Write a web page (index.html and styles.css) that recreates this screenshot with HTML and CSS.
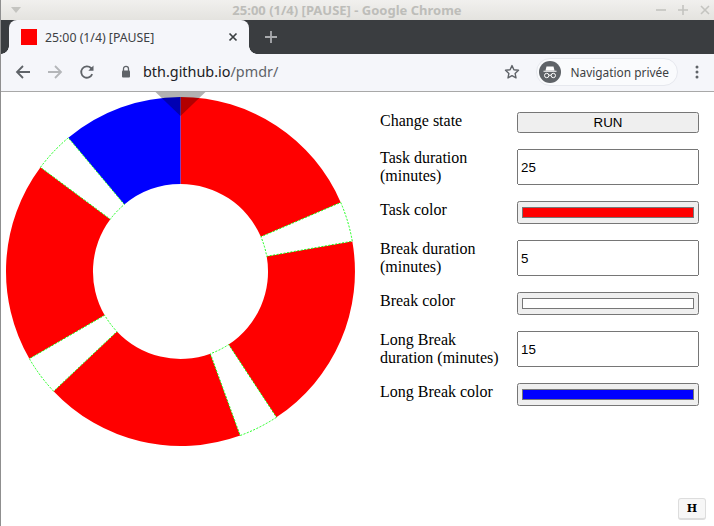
FILE: index.html
```html
<!DOCTYPE html>
<html lang="fr">
<head>
    <meta charset="UTF-8">
    <meta name="viewport" content="width=device-width, initial-scale=1.0">
    <title>25:00 (1/4) [PAUSE]</title>
    <link rel="stylesheet" href="styles.css">
</head>
<body>
    <header class="titlebar">
        <svg class="win-menu" width="12" height="8" viewBox="0 0 12 8"><path d="M1 1h10L6 7z" fill="#c4c4c0"/></svg>
        <span class="win-title">25:00 (1/4) [PAUSE] - Google Chrome</span>
        <div class="win-buttons">
            <svg width="10" height="10" viewBox="0 0 10 10"><path d="M0 5h10" stroke="#c4c4c0" stroke-width="1.6"/></svg>
            <svg width="10" height="10" viewBox="0 0 10 10"><path d="M0 5h10M5 0v10" stroke="#c4c4c0" stroke-width="1.6"/></svg>
            <svg width="10" height="10" viewBox="0 0 10 10"><path d="M1 1l8 8M9 1l-8 8" stroke="#c4c4c0" stroke-width="1.6"/></svg>
        </div>
    </header>

    <div class="tabstrip">
        <div class="tab">
            <span class="favicon"></span>
            <span class="tab-title">25:00 (1/4) [PAUSE]</span>
            <svg class="tab-close" width="10" height="10" viewBox="0 0 10 10"><path d="M1.5 1.5l7 7M8.5 1.5l-7 7" stroke="#3c4043" stroke-width="1.7"/></svg>
        </div>
        <svg class="new-tab" width="12" height="12" viewBox="0 0 12 12"><path d="M6 0v12M0 6h12" stroke="#a9abae" stroke-width="1.8"/></svg>
    </div>

    <nav class="toolbar">
        <svg class="nav-icon" width="16" height="16" viewBox="0 0 16 16"><path d="M15 8H2.5M8 2L2 8l6 6" fill="none" stroke="#5f6368" stroke-width="1.8"/></svg>
        <svg class="nav-icon" width="16" height="16" viewBox="0 0 16 16"><path d="M1 8h12.5M8 2l6 6-6 6" fill="none" stroke="#b4b6b9" stroke-width="1.8"/></svg>
        <svg class="nav-icon" width="16" height="16" viewBox="0 0 16 16"><path d="M13.2 10.2A5.7 5.7 0 1 1 12 4l1 1" fill="none" stroke="#5f6368" stroke-width="1.8"/><path d="M14.5 1.5v5.2H9.3z" fill="#5f6368"/></svg>
        <div class="omnibox">
            <svg width="10" height="13" viewBox="0 0 10 13"><path d="M2.5 6V3.8a2.5 2.5 0 0 1 5 0V6" fill="none" stroke="#5f6368" stroke-width="1.3"/><rect x="1" y="5.5" width="8" height="7" rx="1" fill="#5f6368"/></svg>
            <span class="url">bth.github.io<span class="url-path">/pmdr/</span></span>
        </div>
        <svg class="star" width="16" height="16" viewBox="0 0 16 16"><path d="M8 1.6l1.9 4.2 4.6.5-3.4 3.1.9 4.5L8 11.7l-4 2.2.9-4.5-3.4-3.1 4.6-.5z" fill="none" stroke="#5f6368" stroke-width="1.4" stroke-linejoin="round"/></svg>
        <div class="incognito">
            <svg width="22" height="22" viewBox="0 0 22 22">
                <circle cx="11" cy="11" r="11" fill="#5f6368"/>
                <path d="M7.5 5.5h7l1 4h-9zM4.5 9.7h13v1.1h-13z" fill="#fff"/>
                <circle cx="7.7" cy="14.5" r="2.2" fill="none" stroke="#fff" stroke-width="1"/>
                <circle cx="14.3" cy="14.5" r="2.2" fill="none" stroke="#fff" stroke-width="1"/>
                <path d="M9.9 14.2h2.2" stroke="#fff" stroke-width="1"/>
            </svg>
            <span>Navigation privée</span>
        </div>
        <svg class="dots" width="4" height="14" viewBox="0 0 4 14"><circle cx="2" cy="2" r="1.5" fill="#5f6368"/><circle cx="2" cy="7" r="1.5" fill="#5f6368"/><circle cx="2" cy="12" r="1.5" fill="#5f6368"/></svg>
    </nav>

    <main class="page">
        <svg class="timer" width="360" height="434" viewBox="-179.5 -179.5 360 434">
            <g fill="#f00">
                <path d="M0 -174.5A174.5 174.5 0 0 1 160.2 -69.1L80.4 -34.7A87.5 87.5 0 0 0 0 -87.5Z"/>
                <path d="M171.8 -30.3A174.5 174.5 0 0 1 95.9 145.8L48.1 73.1A87.5 87.5 0 0 0 86.2 -15.2Z"/>
                <path d="M59.7 164A174.5 174.5 0 0 1 -126.9 119.7L-63.6 60A87.5 87.5 0 0 0 29.9 82.2Z"/>
                <path d="M-151.1 87.25A174.5 174.5 0 0 1 -140 -104.2L-70.2 -52.3A87.5 87.5 0 0 0 -75.8 43.75Z"/>
            </g>
            <path fill="#00f" d="M-112.2 -133.7A174.5 174.5 0 0 1 0 -174.5L0 -87.5A87.5 87.5 0 0 0 -56.2 -67Z"/>
            <g class="gap">
                <path d="M160.2 -69.1A174.5 174.5 0 0 1 171.8 -30.3L86.2 -15.2A87.5 87.5 0 0 0 80.4 -34.7Z"/>
                <path d="M95.9 145.8A174.5 174.5 0 0 1 59.7 164L29.9 82.2A87.5 87.5 0 0 0 48.1 73.1Z"/>
                <path d="M-126.9 119.7A174.5 174.5 0 0 1 -151.1 87.25L-75.8 43.75A87.5 87.5 0 0 0 -63.6 60Z"/>
                <path d="M-140 -104.2A174.5 174.5 0 0 1 -112.2 -133.7L-56.2 -67A87.5 87.5 0 0 0 -70.2 -52.3Z"/>
            </g>
            <polygon class="marker" points="-25,-179.5 25,-179.5 0,-155.5"/>
        </svg>

        <form class="settings">
            <label>Change state</label>
            <input type="button" value="RUN">
            <label for="task">Task duration (minutes)</label>
            <input type="number" id="task" value="25">
            <label for="taskcolor">Task color</label>
            <input type="color" id="taskcolor" value="#ff0000">
            <label for="break">Break duration (minutes)</label>
            <input type="number" id="break" value="5">
            <label for="breakcolor">Break color</label>
            <input type="color" id="breakcolor" value="#ffffff">
            <label for="long">Long Break duration (minutes)</label>
            <input type="number" id="long" value="15">
            <label for="longcolor">Long Break color</label>
            <input type="color" id="longcolor" value="#0000ff">
        </form>

        <button type="button" class="help">H</button>
    </main>
</body>
</html>
```

FILE: styles.css
```css
html,
body {
    margin: 0;
    padding: 0;
    height: 100%;
}

body {
    display: flex;
    flex-direction: column;
    overflow: hidden;
    box-sizing: border-box;
    border-left: 1px solid #8f8f8f;
    background: #fff;
    font-family: "Noto Sans", sans-serif;
}

/* window title bar */
.titlebar {
    height: 20px;
    flex: none;
    display: flex;
    align-items: center;
    justify-content: space-between;
    padding: 0 4px 0 9px;
    background: linear-gradient(to bottom, #f1f0ee, #e4e3df);
}

.win-title {
    margin-left: 16px;
    font-size: 13px;
    font-weight: bold;
    color: #bdbdb9;
}

.win-buttons {
    display: flex;
    gap: 12px;
}

/* tabs */
.tabstrip {
    height: 34px;
    flex: none;
    display: flex;
    align-items: center;
    padding-left: 8px;
    background: #3a3d40;
}

.tab {
    position: relative;
    align-self: stretch;
    width: 240px;
    box-sizing: border-box;
    display: flex;
    align-items: center;
    padding: 0 11px 0 12px;
    background: #f5f6fa;
    border-radius: 8px 8px 0 0;
}

.tab::before,
.tab::after {
    content: "";
    position: absolute;
    bottom: 0;
    width: 8px;
    height: 8px;
}

.tab::before {
    left: -8px;
    background: radial-gradient(circle at 0 0, transparent 7.5px, #f5f6fa 8px);
}

.tab::after {
    right: -8px;
    background: radial-gradient(circle at 100% 0, transparent 7.5px, #f5f6fa 8px);
}

.favicon {
    width: 16px;
    height: 16px;
    background: #f00;
    margin-right: 8px;
}

.tab-title {
    flex: 1;
    font-size: 12.3px;
    color: #3c4043;
}

.new-tab {
    margin-left: 16px;
}

/* toolbar */
.toolbar {
    height: 38px;
    flex: none;
    display: flex;
    align-items: center;
    padding: 0 15px 2px 14px;
    box-sizing: border-box;
    background: #f5f6fa;
    border-bottom: 1px solid #a8a8a8;
}

.nav-icon {
    margin-right: 16px;
}

.omnibox {
    display: flex;
    align-items: center;
    gap: 12px;
    flex: 1;
    margin-left: 10px;
}

.url {
    font-size: 14.4px;
    color: #202124;
}

.url-path {
    color: #5f6368;
}

.star {
    margin-right: 16px;
}

.incognito {
    display: flex;
    align-items: center;
    gap: 9px;
    height: 26px;
    padding: 0 8px 0 2px;
    margin-right: 17px;
    border: 1px solid #e6e8ee;
    border-radius: 14px;
    font-size: 11.9px;
    color: #3c4043;
    background: #fafbfd;
}

/* page */
.page {
    flex: 1;
    display: flex;
    align-items: flex-start;
    background: #fff;
    position: relative;
}

.timer {
    flex: none;
}

.gap path {
    fill: #fff;
    stroke: #0f0;
    stroke-width: 0.9;
    stroke-dasharray: 2 1.5;
}

.marker {
    fill: rgba(0, 0, 0, 0.3);
}

.settings {
    display: grid;
    grid-template-columns: 137px 182px;
    row-gap: 16px;
    align-items: start;
    margin: 20px 0 0 19px;
}

.settings label {
    font-family: "Liberation Serif", serif;
    font-size: 16px;
    line-height: 18px;
    color: #000;
    padding-right: 16px;
}

.settings input {
    width: 100%;
    box-sizing: border-box;
    margin: 0;
    font-family: "Liberation Sans", sans-serif;
    font-size: 13.333px;
}

.settings input[type="button"] {
    height: 21px;
}

.settings input[type="number"] {
    height: 36px;
}

.settings input[type="color"] {
    height: 23px;
}

.help {
    position: absolute;
    right: 8px;
    bottom: 6px;
    width: 28px;
    height: 22px;
    padding: 0;
    border: 1px solid #ddd;
    border-bottom-width: 2px;
    border-radius: 3px;
    background: #f7f7f7;
    font-family: "DejaVu Serif", serif;
    font-size: 11px;
    font-weight: bold;
    color: #000;
}
```
